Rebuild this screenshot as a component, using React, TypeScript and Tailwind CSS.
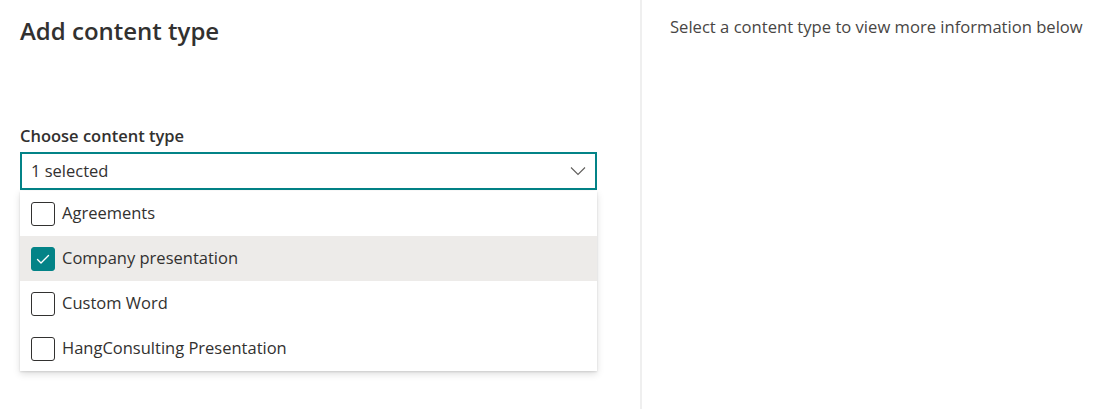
const ITEMS = [
  { label: "Agreements", checked: false },
  { label: "Company presentation", checked: true },
  { label: "Custom Word", checked: false },
  { label: "HangConsulting Presentation", checked: false },
];

const font = "font-['Open_Sans','Noto_Sans',sans-serif]";

const Checkbox = ({ checked }: { checked: boolean }) => (
  <div
    className={`w-6 h-6 rounded-[3px] flex items-center justify-center shrink-0 ${
      checked ? "bg-[#038387] border border-[#038387]" : "bg-white border border-[#323130]"
    }`}
  >
    {checked && (
      <svg width="16" height="16" viewBox="0 0 16 16" fill="none">
        <path d="M2.5 8.5 L6 12 L13.5 4.5" stroke="white" strokeWidth="1.4" strokeLinecap="round" strokeLinejoin="round" />
      </svg>
    )}
  </div>
);

export default function App() {
  return (
    <div className={`w-[1098px] h-[409px] bg-white flex overflow-hidden ${font}`}>
      {/* left panel */}
      <div className="w-[642px] h-full border-r-2 border-[#efefef] pl-5 pt-[15px] shrink-0">
        <h1 className="text-[24px] leading-8 font-semibold text-[#323130]">Add content type</h1>

        <div className="mt-[78px] text-[16.5px] leading-[22px] font-semibold text-[#323130]">Choose content type</div>

        <div className="mt-[5px] w-[577px]">
          <div className="h-[38px] border-2 border-[#038387] flex items-center justify-between pl-[9px] pr-[9px]">
            <span className="text-[16.5px] text-[#323130]">1 selected</span>
            <svg width="16" height="10" viewBox="0 0 16 10" fill="none">
              <path d="M1 1.5 L8 8.5 L15 1.5" stroke="#605e5c" strokeWidth="1.1" />
            </svg>
          </div>

          <div className="mt-px bg-white shadow-[0_3.2px_7.2px_rgba(0,0,0,0.132),0_0.6px_1.8px_rgba(0,0,0,0.108)]">
            {ITEMS.map((item) => (
              <div
                key={item.label}
                className={`h-[45px] flex items-center gap-[7px] pl-[11px] ${item.checked ? "bg-[#edebe9]" : "bg-white"}`}
              >
                <Checkbox checked={item.checked} />
                <span className="text-[16.5px] text-[#323130]">{item.label}</span>
              </div>
            ))}
          </div>
        </div>
      </div>

      {/* right panel */}
      <div className="pl-7 pt-[15px]">
        <p className="text-[16.6px] leading-6 text-[#484644]">Select a content type to view more information below</p>
      </div>
    </div>
  );
}
